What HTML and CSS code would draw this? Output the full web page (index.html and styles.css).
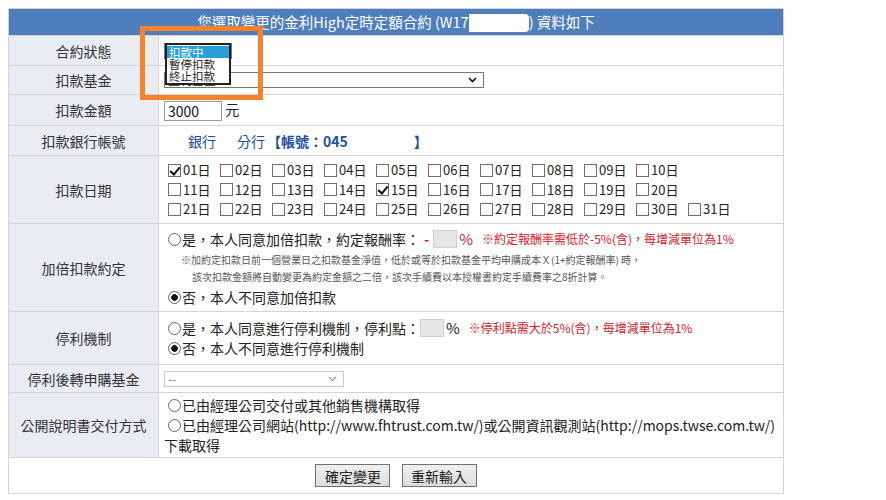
FILE: index.html
```html
<!DOCTYPE html>
<html lang="zh-Hant">
<head>
  <meta charset="UTF-8">
  <meta name="viewport" content="width=device-width, initial-scale=1.0">
  <title>定時定額合約變更</title>
  <link rel="stylesheet" href="styles.css">
</head>
<body>
  <div class="page">
    <table class="contract">
      <colgroup>
        <col class="col-label">
        <col>
      </colgroup>
      <tr class="row-title">
        <th colspan="2" class="title">您選取變更的金利High定時定額合約 (W17<span class="mask"></span>) 資料如下</th>
      </tr>
      <tr class="row-30">
        <td class="label">合約狀態</td>
        <td class="field"><div class="select status"></div></td>
      </tr>
      <tr class="row-29">
        <td class="label">扣款基金</td>
        <td class="field">
          <div class="select fund">
            <span>金利基金</span>
            <svg width="9" height="6" viewBox="0 0 9 6"><path d="M1 1 L4.5 4.5 L8 1" fill="none" stroke="#111" stroke-width="1.6"/></svg>
          </div>
        </td>
      </tr>
      <tr class="row-31">
        <td class="label">扣款金額</td>
        <td class="field"><input type="text" class="amount" value="3000"> 元</td>
      </tr>
      <tr class="row-30">
        <td class="label">扣款銀行帳號</td>
        <td class="field bank">
          <span class="bank-name">銀行</span><span class="branch">分行</span><b class="acct">【帳號：045</b><span class="acct-end">】</span>
        </td>
      </tr>
      <tr class="row-68">
        <td class="label">扣款日期</td>
        <td class="field">
          <div class="days">
            <label class="day"><input type="checkbox" checked>01日</label>
            <label class="day"><input type="checkbox">02日</label>
            <label class="day"><input type="checkbox">03日</label>
            <label class="day"><input type="checkbox">04日</label>
            <label class="day"><input type="checkbox">05日</label>
            <label class="day"><input type="checkbox">06日</label>
            <label class="day"><input type="checkbox">07日</label>
            <label class="day"><input type="checkbox">08日</label>
            <label class="day"><input type="checkbox">09日</label>
            <label class="day"><input type="checkbox">10日</label>
          </div>
          <div class="days">
            <label class="day"><input type="checkbox">11日</label>
            <label class="day"><input type="checkbox">12日</label>
            <label class="day"><input type="checkbox">13日</label>
            <label class="day"><input type="checkbox">14日</label>
            <label class="day"><input type="checkbox" checked>15日</label>
            <label class="day"><input type="checkbox">16日</label>
            <label class="day"><input type="checkbox">17日</label>
            <label class="day"><input type="checkbox">18日</label>
            <label class="day"><input type="checkbox">19日</label>
            <label class="day"><input type="checkbox">20日</label>
          </div>
          <div class="days">
            <label class="day"><input type="checkbox">21日</label>
            <label class="day"><input type="checkbox">22日</label>
            <label class="day"><input type="checkbox">23日</label>
            <label class="day"><input type="checkbox">24日</label>
            <label class="day"><input type="checkbox">25日</label>
            <label class="day"><input type="checkbox">26日</label>
            <label class="day"><input type="checkbox">27日</label>
            <label class="day"><input type="checkbox">28日</label>
            <label class="day"><input type="checkbox">29日</label>
            <label class="day"><input type="checkbox">30日</label>
            <label class="day"><input type="checkbox">31日</label>
          </div>
        </td>
      </tr>
      <tr class="row-88">
        <td class="label">加倍扣款約定</td>
        <td class="field">
          <div class="line">
            <label><input type="radio" name="double">是，本人同意加倍扣款，約定報酬率：</label><span class="minus">-</span><input type="text" class="rate" disabled><span class="pct red">%</span><span class="warn">※約定報酬率需低於-5%(含)，每增減單位為1%</span>
          </div>
          <p class="note first">※加約定扣款日前一個營業日之扣款基金淨值，低於或等於扣款基金平均申購成本Ｘ(1+約定報酬率) 時，</p>
          <p class="note second">該次扣款金額將自動變更為約定金額之二倍，該次手續費以本授權書約定手續費率之8折計算。</p>
          <div class="line last">
            <label><input type="radio" name="double" checked>否，本人不同意加倍扣款</label>
          </div>
        </td>
      </tr>
      <tr class="row-53">
        <td class="label">停利機制</td>
        <td class="field">
          <div class="line">
            <label><input type="radio" name="stop">是，本人同意進行停利機制，停利點：</label><input type="text" class="rate" disabled><span class="pct">%</span><span class="warn">※停利點需大於5%(含)，每增減單位為1%</span>
          </div>
          <div class="line">
            <label><input type="radio" name="stop" checked>否，本人不同意進行停利機制</label>
          </div>
        </td>
      </tr>
      <tr class="row-28">
        <td class="label">停利後轉申購基金</td>
        <td class="field">
          <div class="select after disabled">
            <span>--</span>
            <svg width="9" height="6" viewBox="0 0 9 6"><path d="M1 1 L4.5 4.5 L8 1" fill="none" stroke="#999" stroke-width="1.2"/></svg>
          </div>
        </td>
      </tr>
      <tr class="row-65">
        <td class="label">公開說明書交付方式</td>
        <td class="field prospectus">
          <label><input type="radio" name="doc">已由經理公司交付或其他銷售機構取得</label><br>
          <label class="nowrap"><input type="radio" name="doc">已由經理公司網站(http://www.fhtrust.com.tw/)或公開資訊觀測站(http://mops.twse.com.tw/)</label><br>
          <span>下載取得</span>
        </td>
      </tr>
      <tr class="row-36">
        <td colspan="2" class="actions">
          <button type="button" class="btn">確定變更</button>
          <button type="button" class="btn">重新輸入</button>
        </td>
      </tr>
    </table>

    <!-- open status list -->
    <ul class="dropdown">
      <li class="active">扣款中</li>
      <li>暫停扣款</li>
      <li>終止扣款</li>
    </ul>

    <!-- highlight frame -->
    <div class="callout"></div>
  </div>
</body>
</html>
```

FILE: styles.css
```css
/* General Styles */
* {
  box-sizing: border-box;
}

body {
  margin: 8px;
  font-family: "Noto Sans CJK TC", "Noto Sans", sans-serif;
  font-size: 14px;
  color: #222;
  background: #fff;
}

.page {
  position: relative;
  width: 776px;
}

.contract {
  width: 776px;
  border-collapse: collapse;
  border: 1px solid #d4d4d4;
  table-layout: fixed;
}

.col-label {
  width: 150px;
}

.contract th,
.contract td {
  border: 1px solid #d4d4d4;
  padding: 0 5px;
  line-height: 20px;
  vertical-align: middle;
}

.row-title { height: 27px; }
.row-28 { height: 28px; }
.row-29 { height: 29px; }
.row-30 { height: 30px; }
.row-31 { height: 31px; }
.row-36 { height: 36px; }
.row-53 { height: 53px; }
.row-65 { height: 65px; }
.row-68 { height: 68px; }
.row-88 { height: 88px; }

.title {
  background: #4f7ebd;
  color: #fff;
  font-weight: normal;
  font-size: 14.5px;
  text-align: center;
  border-color: #d4d4d4 #4f7ebd;
}

.mask {
  display: inline-block;
  width: 60px;
  height: 18px;
  background: #fff;
  vertical-align: -4px;
  border-radius: 0 4px 4px 0;
}

.label {
  background: #e9ecf1;
  text-align: center;
  color: #333;
}

/* select boxes */
.select {
  display: flex;
  align-items: center;
  justify-content: space-between;
  height: 16px;
  padding: 0 6px 0 3px;
  border: 1px solid #767676;
  font-size: 12px;
  line-height: 14px;
  background: #fff;
}

.select.status { width: 68px; }
.select.fund { width: 320px; }

.select.after {
  width: 180px;
  border-color: #c9c9c9;
  color: #888;
}

.amount {
  width: 58px;
  height: 20px;
  padding: 0 3px;
  border: 1px solid #9a9a9a;
  font-family: inherit;
  font-size: 14px;
  color: #111;
  vertical-align: middle;
}

/* bank account */
.bank {
  color: #1d4f9b;
}

.bank-name { margin-left: 24px; }
.branch { margin-left: 21px; }
.acct { margin-left: 2px; }
.acct-end {
  margin-left: 66px;
  font-weight: bold;
}

/* date checkboxes */
.days {
  display: flex;
  padding-left: 4px;
}

.day {
  display: flex;
  align-items: center;
  width: 52px;
  height: 19.5px;
  font-size: 13px;
}

input[type="checkbox"] {
  appearance: none;
  position: relative;
  width: 13px;
  height: 13px;
  margin: 0 2px 0 0;
  border: 1px solid #6f6f6f;
  background: #fff;
}

input[type="checkbox"]:checked::after {
  content: "";
  position: absolute;
  left: 3px;
  top: 0;
  width: 4px;
  height: 8px;
  border: solid #111;
  border-width: 0 2px 2px 0;
  transform: rotate(40deg);
}

input[type="radio"] {
  appearance: none;
  width: 13px;
  height: 13px;
  margin: 0 1px 0 4px;
  border: 1px solid #666;
  border-radius: 50%;
  background: #fff;
  vertical-align: -1px;
}

input[type="radio"]:checked {
  background: radial-gradient(circle, #111 0, #111 3px, #fff 3.6px);
}

/* option lines */
.line {
  display: flex;
  align-items: center;
  height: 20px;
  white-space: nowrap;
}

.line.last { margin-top: 2px; }

.minus {
  color: #e02020;
  margin: 0 4px 0 4px;
  font-weight: bold;
}

.rate {
  width: 24px;
  height: 18px;
  border: 1px solid #cfcfcf;
  background: #e6e6e6;
}

.pct {
  font-size: 15px;
  margin-left: 2px;
}

.red { color: #d42029; }

.warn {
  margin-left: 9px;
  font-size: 12px;
  color: #d42029;
}

.note {
  margin: 0;
  font-size: 10px;
  line-height: 17px;
  color: #555;
  white-space: nowrap;
}

.note.first { margin-top: 2px; padding-left: 17px; }
.note.second { padding-left: 28px; }

.prospectus {
  line-height: 18px;
}

.nowrap {
  white-space: nowrap;
}

/* buttons */
.actions {
  text-align: center;
}

.btn {
  width: 75px;
  height: 23px;
  margin: 0 4px;
  padding: 0;
  border: 1px solid #707070;
  background: linear-gradient(#f0f0f0, #dddddd);
  font-family: inherit;
  font-size: 14px;
  color: #222;
}

/* open list of contract status */
.dropdown {
  position: absolute;
  left: 157px;
  top: 35px;
  width: 66px;
  margin: 0;
  padding: 1px 0;
  list-style: none;
  border: 2px solid #222;
  background: #fff;
  font-size: 11.5px;
  line-height: 12px;
}

.dropdown li {
  padding: 0 2px;
  height: 12px;
}

.dropdown .active {
  background: #27a0da;
  color: #fff;
}

.callout {
  position: absolute;
  left: 132px;
  top: 18px;
  width: 123px;
  height: 74px;
  border: 5px solid #f5832b;
}
```
